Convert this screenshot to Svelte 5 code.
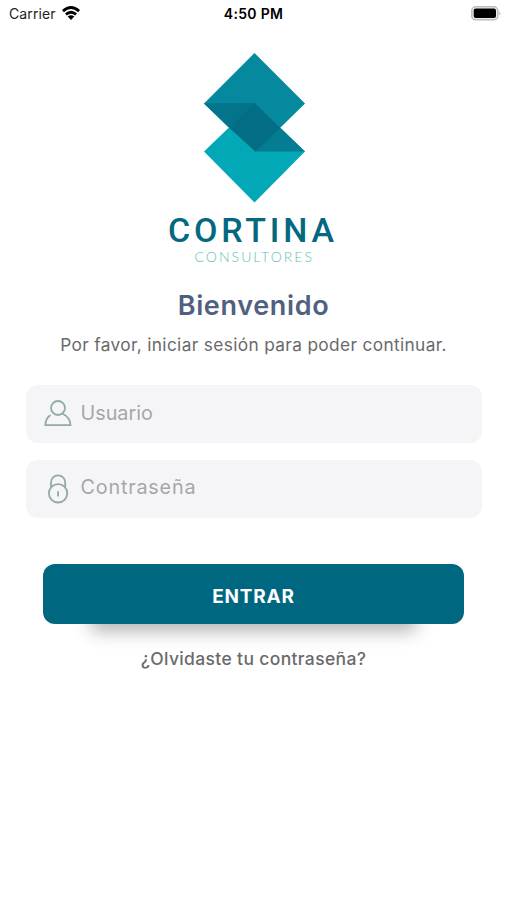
<script>
  let username = $state('');
  let password = $state('');
</script>

<main class="screen">
  <header class="status">
    <div class="carrier">
      <span>Carrier</span>
      <svg class="wifi" width="18" height="14" viewBox="0 0 18 14" fill="none" stroke="#000" stroke-width="2.8">
        <path d="M.9 5.1Q9-2.1 17.1 5.1" />
        <path d="M3.9 8.4Q9 4.1 14.1 8.4" />
        <path d="M9 13.9 5.7 10.6Q9 7.7 12.3 10.6Z" fill="#000" stroke="none" />
      </svg>
    </div>
    <time>4:50 PM</time>
    <div class="power">
      <svg width="30" height="15" viewBox="0 0 30 15">
        <rect x=".8" y=".8" width="26" height="13" rx="3.8" fill="#eee" stroke="#bdbdbd" stroke-width="1.5" />
        <rect x="2.7" y="2.6" width="22.3" height="9.4" rx="2" fill="#000" />
        <path d="M28.3 5.2q2 2.1 0 4.2z" fill="#aaa" />
      </svg>
    </div>
  </header>

  <svg class="logo" width="170" height="218" viewBox="0 0 170 218">
    <path d="M85.5 3 136 53.5 85.5 103 35 53.5Z" fill="#04899f" />
    <path d="M85.5 53 136 101.5 85.5 152.5 35 101.5Z" fill="#03a8b6" />
    <path d="M35 53.5 85.5 53 136 101.5H86.5Z" fill="#047d93" />
    <path d="M35 53.5 85.5 53 111 78 86.5 101.5Z" fill="#04748c" />
    <path d="M85.5 53 111 78 86.5 101.5 60.5 78Z" fill="#046d86" />
    <text class="brand" x="-1" y="192" textLength="166" lengthAdjust="spacing">CORTINA</text>
    <text class="tagline" x="25.5" y="211.5" textLength="117.5" lengthAdjust="spacing">CONSULTORES</text>
  </svg>

  <h1>Bienvenido</h1>
  <p class="intro">Por favor, iniciar sesión para poder continuar.</p>

  <form onsubmit={(e) => e.preventDefault()}>
    <label class="field">
      <svg width="28" height="30" viewBox="0 0 28 30" fill="none" stroke="#91aaa6" stroke-width="1.8" stroke-linecap="round" stroke-linejoin="round">
        <circle cx="14" cy="9" r="7" />
        <path d="M6 16.5Q1.7 19.5 1.3 26.2H26.6Q26 18.2 19 15" />
      </svg>
      <input type="text" placeholder="Usuario" aria-label="Usuario" bind:value={username} />
    </label>
    <label class="field">
      <svg width="28" height="30" viewBox="0 0 28 30" fill="none" stroke="#91aaa6" stroke-width="1.8" stroke-linecap="round">
        <path d="M7 13V8.5a7.1 7.1 0 0 1 14.2 0V13" />
        <circle cx="14.1" cy="19.3" r="9.2" />
        <path d="M14.1 17.8v4" />
      </svg>
      <input class="secret" type="password" placeholder="Contraseña" aria-label="Contraseña" bind:value={password} />
    </label>
    <div class="action">
      <button type="submit">ENTRAR</button>
    </div>
  </form>
  <a class="forgot" href="#recover">¿Olvidaste tu contraseña?</a>
</main>

<style>
  :global(body) { background: #fff; }
  .screen {
    box-sizing: border-box;
    min-height: 900px;
    display: flex;
    flex-direction: column;
    align-items: center;
    font-family: Inter, "Open Sans", sans-serif;
    background: #fff;
  }
  .status {
    box-sizing: border-box;
    width: 100%;
    height: 28px;
    padding: 0 6px 0 9px;
    display: grid;
    grid-template-columns: 1fr auto 1fr;
    align-items: center;
    font-size: 14px;
    line-height: 28px;
    color: #000;
  }
  .carrier { display: flex; align-items: center; gap: 6px; color: #222; letter-spacing: 0.1px; }
  .wifi { margin-top: -2px; }
  time { font-weight: 600; letter-spacing: 0.3px; padding-right: 3px; }
  .power { display: flex; justify-content: flex-end; margin-top: -2px; }
  .logo { margin-top: 22px; display: block; overflow: visible; }
  .brand { font: 500 34px Roboto, sans-serif; fill: #04687f; }
  .tagline { font: 300 14px Lato, sans-serif; fill: #5cbfb0; }
  h1 {
    margin: 18px 0 0;
    font-size: 27px;
    line-height: 40px;
    font-weight: 600;
    letter-spacing: 0.65px;
    color: #50617f;
  }
  .intro {
    margin: 7px 0 0;
    font-size: 17.3px;
    line-height: 24px;
    letter-spacing: 0.35px;
    color: #69696b;
    white-space: nowrap;
  }
  form { width: 456px; display: flex; flex-direction: column; margin-top: 28px; }
  .field {
    box-sizing: border-box;
    height: 58px;
    padding: 0 18px;
    display: flex;
    align-items: center;
    gap: 9px;
    border-radius: 12px;
    background: #f5f5f8;
  }
  .field + .field { margin-top: 17px; }
  input {
    flex: 1;
    min-width: 0;
    padding: 0 0 2px;
    border: 0;
    outline: 0;
    background: transparent;
    font: 400 19.8px Inter, sans-serif;
    color: #555;
  }
  input::placeholder { color: #a5a6ab; opacity: 1; }
  .secret { letter-spacing: 0.8px; padding-bottom: 4px; }
  .action {
    position: relative;
    isolation: isolate;
    width: 421px;
    height: 60px;
    margin: 46px auto 0;
  }
  .action::after {
    content: "";
    position: absolute;
    z-index: -1;
    left: 48px;
    right: 48px;
    bottom: -7px;
    height: 30px;
    background: rgb(0 0 0 / 30%);
    filter: blur(9px);
  }
  button {
    display: block;
    width: 100%;
    height: 100%;
    padding: 5px 0 0;
    border: 0;
    border-radius: 12px;
    background: #006780;
    color: #fff;
    font: 700 19px Inter, sans-serif;
    letter-spacing: 0.8px;
  }
  .forgot {
    margin-top: 23px;
    font-size: 17.5px;
    line-height: 24px;
    font-weight: 500;
    letter-spacing: 0.35px;
    color: #6a6a6c;
    text-decoration: none;
  }
</style>
